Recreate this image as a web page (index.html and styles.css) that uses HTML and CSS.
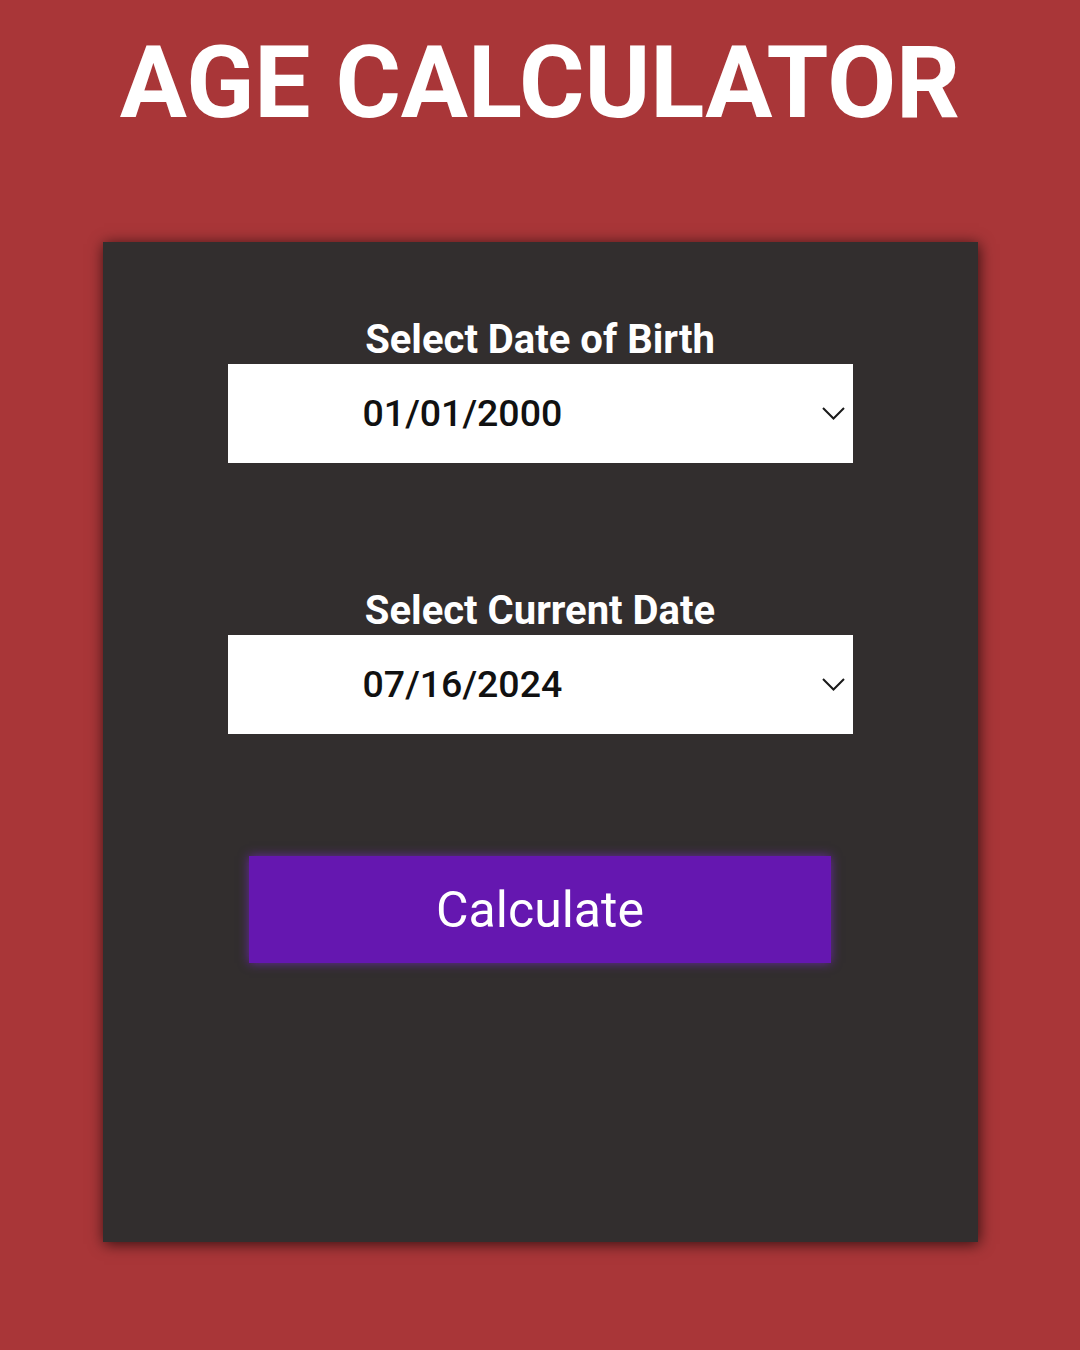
FILE: index.html
```html
<!DOCTYPE html>
<html lang="en">
<head>
<meta charset="utf-8">
<title>Age Calculator</title>
<link rel="stylesheet" href="styles.css">
</head>
<body>
  <h1 class="title">AGE CALCULATOR</h1>
  <main class="card">
    <div class="field">
      <label class="label">Select Date of Birth</label>
      <div class="date-input">
        <span class="date-value">01/01/2000</span>
        <svg class="chevron" width="23" height="13" viewBox="0 0 23 13"><path d="M1 1 L11.5 11.5 L22 1" fill="none" stroke="#1a1a1a" stroke-width="2"/></svg>
      </div>
    </div>
    <div class="field field-second">
      <label class="label">Select Current Date</label>
      <div class="date-input">
        <span class="date-value">07/16/2024</span>
        <svg class="chevron" width="23" height="13" viewBox="0 0 23 13"><path d="M1 1 L11.5 11.5 L22 1" fill="none" stroke="#1a1a1a" stroke-width="2"/></svg>
      </div>
    </div>
    <button class="calc-btn" type="button">Calculate</button>
  </main>
</body>
</html>
```
FILE: styles.css
```css
html, body {
  margin: 0;
  padding: 0;
}
body {
  background: #a93638;
  font-family: Roboto, "Liberation Sans", sans-serif;
  width: 1080px;
  height: 1350px;
  overflow: hidden;
  display: flex;
  flex-direction: column;
  align-items: center;
}
.title {
  margin: 24px 0 0 0;
  font-size: 100px;
  font-weight: 700;
  line-height: 118px;
  color: #ffffff;
  text-align: center;
}
.card {
  margin-top: 100px;
  width: 875px;
  height: 1000px;
  background: #322e2e;
  box-shadow: 1px 2px 14px rgba(0, 0, 0, 0.7);
  display: flex;
  flex-direction: column;
  align-items: center;
  box-sizing: border-box;
  padding-top: 74px;
}
.field {
  display: flex;
  flex-direction: column;
  align-items: center;
}
.field-second {
  margin-top: 124px;
}
.label {
  font-size: 40px;
  font-weight: 700;
  color: #ffffff;
  line-height: 47px;
  margin-bottom: 1px;
}
.date-input {
  width: 625px;
  height: 99px;
  background: #ffffff;
  display: flex;
  align-items: center;
  box-sizing: border-box;
  padding-left: 135px;
  padding-right: 8px;
}
.date-value {
  flex: 1;
  font-size: 37.5px;
  font-weight: 500;
  color: #111111;
  margin-bottom: 2px;
}
.chevron {
  display: block;
}
.calc-btn {
  margin-top: 122px;
  width: 582px;
  height: 107px;
  background: #6517b0;
  border: none;
  color: #ffffff;
  font-family: Roboto, "Liberation Sans", sans-serif;
  font-size: 50px;
  font-weight: 400;
  box-shadow: 0 0 10px rgba(130, 40, 220, 0.65);
  padding: 0;
}
```
